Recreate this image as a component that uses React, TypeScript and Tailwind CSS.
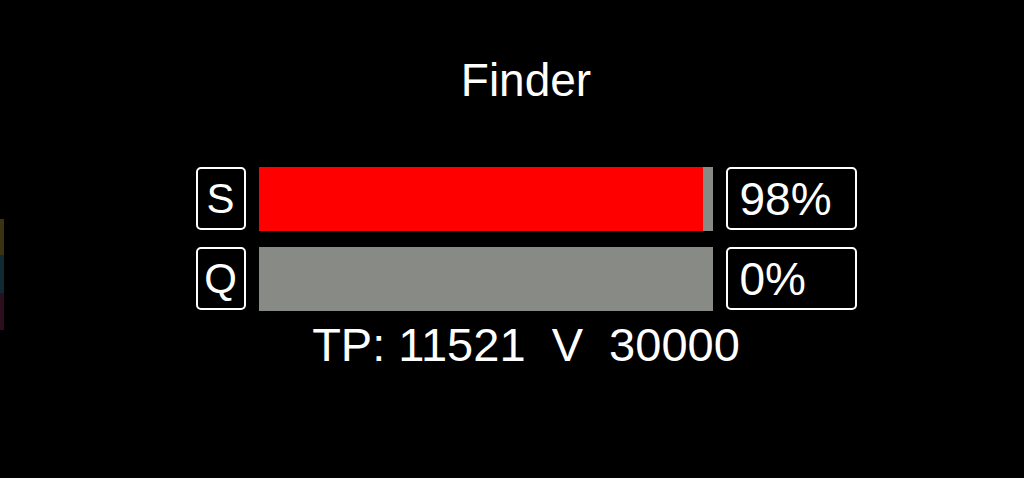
type Meter = {
  label: string;
  value: number;
};

const meters: Meter[] = [
  { label: "S", value: 98 },
  { label: "Q", value: 0 },
];

function MeterRow({ label, value }: Meter) {
  return (
    <div className="flex h-[63px] items-stretch gap-[13px]">
      <div className="flex w-[50px] items-center justify-center rounded-[5px] border-2 border-white text-[42px] leading-none">
        {label}
      </div>
      <div className="flex h-[64px] w-[454px] bg-[#878a85]">
        <div className="h-full bg-[#ff0000]" style={{ width: `${value}%` }} />
      </div>
      <div className="flex w-[131px] items-center rounded-[5px] border-2 border-white pl-3 text-[46px] leading-none">
        {value}%
      </div>
    </div>
  );
}

export default function App() {
  return (
    <div className="relative h-[478px] w-full overflow-hidden bg-black text-white [font-family:'Liberation_Sans',Arial,sans-serif]">
      {/* faint colour strip on the left edge */}
      <div className="absolute left-0 top-[219px] flex w-[4px] flex-col">
        <div className="h-[36px] bg-[#3b3212]" />
        <div className="h-[38px] bg-[#0e2a33]" />
        <div className="h-[37px] bg-[#2c0e1f]" />
      </div>

      <div className="flex flex-col items-center pl-[28px] pt-[57px]">
        <div className="text-[46px] leading-none">Finder</div>
        <div className="mt-[64px] flex flex-col gap-[17px]">
          {meters.map((m) => (
            <MeterRow key={m.label} {...m} />
          ))}
        </div>
        <div className="mt-[11px] whitespace-pre text-[47px] leading-none">
          {"TP: 11521  V  30000"}
        </div>
      </div>
    </div>
  );
}
